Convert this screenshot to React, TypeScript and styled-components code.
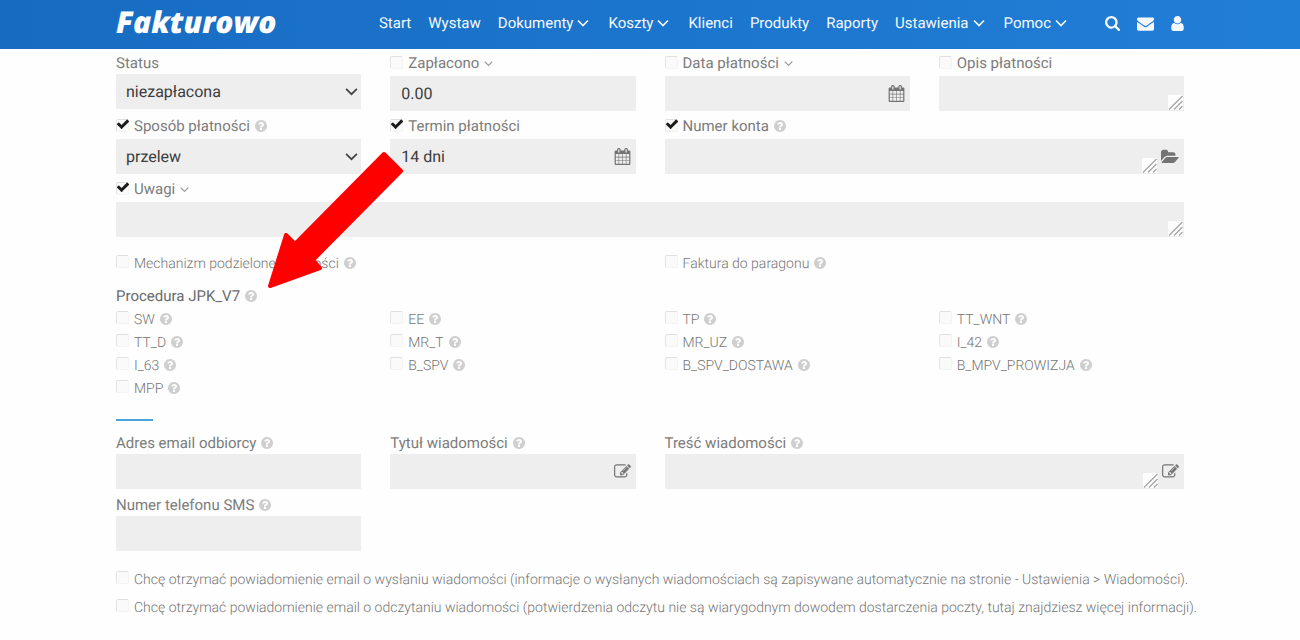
import React from "react";
import styled, { createGlobalStyle } from "styled-components";

const GlobalStyle = createGlobalStyle`
  *, *::before, *::after { box-sizing: border-box; }
  html, body { margin: 0; padding: 0; background: #fefefe; }
  body { font-family: Roboto, "Noto Sans", sans-serif; font-size: 15px; color: #777; text-rendering: geometricPrecision; }
  button, input, select, textarea { font: inherit; color: inherit; text-rendering: inherit; }
`;

const paths = {
  calendar:
    "M192 1664h288v-288h-288v288zm352 0h320v-288h-320v288zm-352-352h288v-320h-288v320zm352 0h320v-320h-320v320zm-352-384h288v-288h-288v288zm736 736h320v-288h-320v288zm-384-736h320v-288h-320v288zm768 736h288v-288h-288v288zm-384-352h320v-320h-320v320zm-352-864v-288q0-13-9.5-22.5t-22.5-9.5h-64q-13 0-22.5 9.5t-9.5 22.5v288q0 13 9.5 22.5t22.5 9.5h64q13 0 22.5-9.5t9.5-22.5zm736 864h288v-320h-288v320zm-384-384h320v-288h-320v288zm384 0h288v-288h-288v288zm32-480v-288q0-13-9.5-22.5t-22.5-9.5h-64q-13 0-22.5 9.5t-9.5 22.5v288q0 13 9.5 22.5t22.5 9.5h64q13 0 22.5-9.5t9.5-22.5zm384-64v1280q0 52-38 90t-90 38h-1408q-52 0-90-38t-38-90v-1280q0-52 38-90t90-38h128v-96q0-66 47-113t113-47h64q66 0 113 47t47 113v96h384v-96q0-66 47-113t113-47h64q66 0 113 47t47 113v96h128q52 0 90 38t38 90z",
  edit:
    "M888 1184l116-116-152-152-116 116v56h96v96h56zm440-720q-16-16-33 1l-350 350q-17 17-1 33t33-1l350-350q17-17 1-33zm80 594v190q0 119-84.5 203.5t-203.5 84.5h-832q-119 0-203.5-84.5t-84.5-203.5v-832q0-119 84.5-203.5t203.5-84.5h832q63 0 117 25 15 7 18 23 3 17-9 29l-49 49q-14 14-32 8-23-6-45-6h-832q-66 0-113 47t-47 113v832q0 66 47 113t113 47h832q66 0 113-47t47-113v-126q0-13 9-22l64-64q15-15 35-7t20 29zm-96-738l288 288-672 672h-288v-288zm444 132l-92 92-288-288 92-92q28-28 68-28t68 28l152 152q28 28 28 68t-28 68z",
  search:
    "M1216 832q0-185-131.5-316.5t-316.5-131.5-316.5 131.5-131.5 316.5 131.5 316.5 316.5 131.5 316.5-131.5 131.5-316.5zm512 832q0 52-38 90t-90 38q-54 0-90-38l-343-342q-179 124-399 124-143 0-273.5-55.5t-225-150-150-225-55.5-273.5 55.5-273.5 150-225 225-150 273.5-55.5 273.5 55.5 225 150 150 225 55.5 273.5q0 220-124 399l343 343q37 37 37 90z",
  user:
    "M1536 1399q0 109-62.5 187t-150.5 78h-854q-88 0-150.5-78t-62.5-187q0-85 8.5-160.5t31.5-152 58.5-131 94-89 134.5-34.5q131 128 313 128t313-128q76 0 134.5 34.5t94 89 58.5 131 31.5 152 8.5 160.5zm-256-887q0 159-112.5 271.5t-271.5 112.5-271.5-112.5-112.5-271.5 112.5-271.5 271.5-112.5 271.5 112.5 112.5 271.5z",
  mail:
    "M1792 710v794q0 66-47 113t-113 47h-1472q-66 0-113-47t-47-113v-794q44 49 101 87 362 246 497 345 57 42 92.5 65.5t94.5 48 110 24.5h2q51 0 110-24.5t94.5-48 92.5-65.5q170-123 498-345 57-39 100-87zm0-294q0 79-49 151t-122 123q-376 261-468 325-10 7-42.5 31t-54 38.5-52 32.5-57.5 27-50 9h-2q-23 0-50-9t-57.5-27-52-32.5-54-38.5-42.5-31q-91-64-262-182.5t-205-142.5q-62-42-117-115.5t-55-136.5q0-78 41.5-130t118.5-52h1472q65 0 112.5 47t47.5 113z",
  help:
    "M1024 1376v-192q0-14-9-23t-23-9h-192q-14 0-23 9t-9 23v192q0 14 9 23t23 9h192q14 0 23-9t9-23zm256-672q0-88-55.5-163t-138.5-116-170-41q-243 0-371 213-15 24 8 42l132 100q7 6 19 6 16 0 25-12 53-68 86-92 34-24 86-24 48 0 85.5 26t37.5 59q0 38-20 61t-68 45q-63 28-115.5 86.5t-52.5 125.5v36q0 14 9 23t23 9h192q14 0 23-9t9-23q0-19 21.5-49.5t54.5-49.5q32-18 49-28.5t46-35 44.5-48 28-60.5 12.5-81zm384 192q0 209-103 385.5t-279.5 279.5-385.5 103-385.5-103-279.5-279.5-103-385.5 103-385.5 279.5-279.5 385.5-103 385.5 103 279.5 279.5 103 385.5z",
  folder:
    "M1879 952q0 31-31 66l-336 396q-43 51-120.5 86.5t-143.5 35.5h-1088q-34 0-60.5-13t-26.5-43q0-31 31-66l336-396q43-51 120.5-86.5t143.5-35.5h1088q34 0 60.5 13t26.5 43zm-343-344v160h-832q-94 0-197 47.5t-164 119.5l-337 396-5 6q0-4-.5-12.5t-.5-12.5v-960q0-92 66-158t158-66h320q92 0 158 66t66 158v32h544q92 0 158 66t66 158z",
  check:
    "M1671 566q0 40-28 68l-724 724-136 136q-28 28-68 28t-68-28l-136-136-362-362q-28-28-28-68t28-68l136-136q28-28 68-28t68 28l294 295 656-657q28-28 68-28t68 28l136 136q28 28 28 68z",
};

type GlyphName = keyof typeof paths;

const boxes: Partial<Record<GlyphName, string>> = {
  folder: "0 0 1920 1792",
  help: "128 128 1536 1536",
  search: "64 128 1664 1664",
  user: "256 128 1280 1536",
};

const Svg = styled.svg`
  display: block;
  flex: none;
  fill: currentColor;
`;

function Glyph({ name, size, height }: { name: GlyphName; size: number; height?: number }) {
  return (
    <Svg viewBox={boxes[name] ?? "0 0 1792 1792"} width={size} height={height ?? size} aria-hidden="true">
      <path d={paths[name]} />
    </Svg>
  );
}

const ChevronSvg = styled.svg`
  display: block;
  flex: none;
  fill: none;
  stroke: currentColor;
`;

function Chevron({ size }: { size: number }) {
  return (
    <ChevronSvg viewBox="0 0 12 12" width={size} height={size} strokeWidth={1.6} aria-hidden="true">
      <path d="M1 3.5 6 8.5 11 3.5" />
    </ChevronSvg>
  );
}

const Header = styled.header`
  background: linear-gradient(90deg, #176cc1, #217ed7);
  color: #f4f9ff;
`;

const HeaderInner = styled.div`
  max-width: 1068px;
  height: 49px;
  margin: 0 auto;
  display: flex;
  align-items: center;
  justify-content: space-between;
`;

const Logo = styled.a`
  color: #fff;
  font-family: "Open Sans", sans-serif;
  font-weight: 800;
  font-style: italic;
  font-size: 30px;
  line-height: 40px;
  padding-bottom: 5px;
  text-decoration: none;
`;

const Nav = styled.nav`
  display: flex;
  align-items: center;
  gap: 17px;
  padding-bottom: 3px;
`;

const NavLink = styled.a<{ $menu?: boolean }>`
  display: flex;
  align-items: center;
  gap: 4px;
  margin-right: ${(p) => (p.$menu ? 2 : 0)}px;
  color: inherit;
  line-height: 20px;
  text-decoration: none;
`;

const NavTools = styled.div`
  display: flex;
  align-items: center;
  gap: 17px;
  padding-left: 19px;
`;

const IconButton = styled.button`
  display: flex;
  padding: 0;
  border: 0;
  background: none;
  cursor: pointer;
`;

const Main = styled.main`
  position: relative;
  max-width: 1068px;
  margin: 0 auto;
  padding-top: 1px;
`;

const Grid = styled.div<{ $rowGap?: number }>`
  display: grid;
  grid-template-columns: repeat(4, minmax(0, 1fr));
  column-gap: 29px;
  row-gap: ${(p) => p.$rowGap ?? 0}px;
`;

const Cell = styled.div<{ $span?: number }>`
  grid-column: span ${(p) => p.$span ?? 1};
  min-width: 0;
`;

const LabelRow = styled.div<{ $tall?: boolean }>`
  display: flex;
  align-items: center;
  height: ${(p) => (p.$tall ? 26 : 24)}px;
  padding-top: ${(p) => (p.$tall ? 0 : 2)}px;
  gap: 5px;
  line-height: 20px;
  color: #7c7c7c;
`;

const LightRow = styled.div`
  display: flex;
  align-items: center;
  gap: 5px;
  min-height: 23px;
  font-size: 14px;
  font-weight: 300;
  line-height: 20px;
  color: #757575;
  label { padding-top: 2px; }
  @media (min-width: 1200px) { white-space: nowrap; }
`;

const Help = styled(IconButton)`
  color: #cfcfcf;
`;

const Toggle = styled(IconButton)`
  color: #999;
`;

const Tick = styled.span`
  position: relative;
  flex: none;
  display: block;
  width: 13px;
  height: 15px;
  color: #1c1c1c;
  svg { position: absolute; top: -2px; left: 0; pointer-events: none; }
`;

const TickInput = styled.input`
  appearance: none;
  display: block;
  width: 13px;
  height: 13px;
  margin: 0;
  border: 1px solid #f4f4f4;
  border-top-color: #e0e0e0;
  border-left-color: #e4e4e4;
  border-radius: 2px;
  background: #fafafa;
`;

function CheckBox({ id, checked, label }: { id: string; checked?: boolean; label?: string }) {
  return (
    <Tick>
      <TickInput type="checkbox" id={id} defaultChecked={checked} aria-label={label} />
      {checked && <Glyph name="check" size={14} />}
    </Tick>
  );
}

const FieldBox = styled.div`
  position: relative;
  display: flex;
  align-items: center;
  height: 35px;
  background: #eee;
  color: #777;
`;

const TextInput = styled.input`
  flex: 1;
  min-width: 0;
  height: 35px;
  padding: 0 11px;
  border: 0;
  background: transparent;
  font-size: 16px;
  color: #3c3c3c;
`;

const Select = styled.select`
  appearance: none;
  flex: 1;
  height: 35px;
  padding: 0 10px;
  border: 0;
  border-radius: 0;
  background: transparent;
  font-size: 16px;
  color: #3c3c3c;
`;

const SelectMark = styled.span`
  position: absolute;
  right: 3px;
  top: 11px;
  color: #444;
  pointer-events: none;
`;

const AreaWrap = styled.div`
  position: relative;
  flex: 1;
  height: 35px;
`;

const TextArea = styled.textarea`
  display: block;
  width: 100%;
  height: 35px;
  padding: 8px 11px;
  border: 0;
  background: transparent;
  resize: none;
`;

const Grip = styled.svg`
  position: absolute;
  right: 1px;
  bottom: 1px;
  background: #fdfdfd;
  stroke: #a5a5a5;
  fill: none;
  pointer-events: none;
`;

const FieldIcon = styled(IconButton)`
  color: #747474;
  padding: 0 5px 0 3px;
`;

function Area({ id }: { id: string }) {
  return (
    <AreaWrap>
      <TextArea id={id} />
      <Grip width="15" height="15" viewBox="0 0 15 15" aria-hidden="true">
        <path d="M1 14.5 14.5 1M6 14.5 14.5 6M11 14.5 14.5 11" strokeWidth="1.3" />
      </Grip>
    </AreaWrap>
  );
}

type LabelProps = {
  id: string;
  text: string;
  tick?: boolean;
  checked?: boolean;
  help?: boolean;
  menu?: boolean;
};

function FieldLabel({ id, text, tick, checked, help, menu }: LabelProps) {
  return (
    <LabelRow $tall={tick}>
      {tick && <CheckBox id={`${id}-on`} checked={checked} label={text} />}
      <label htmlFor={id}>{text}</label>
      {help && <HelpMark />}
      {menu && (
        <Toggle type="button" aria-label="Rozwiń">
          <Chevron size={9} />
        </Toggle>
      )}
    </LabelRow>
  );
}

function HelpMark() {
  return (
    <Help type="button" aria-label="Pomoc">
      <Glyph name="help" size={12} />
    </Help>
  );
}

function Option({ id, text, help }: { id: string; text: string; help?: boolean }) {
  return (
    <LightRow>
      <CheckBox id={id} />
      <label htmlFor={id}>{text}</label>
      {help && <HelpMark />}
    </LightRow>
  );
}

const Options = styled(Grid)`
  padding-top: 14px;
`;

const Heading = styled(LabelRow)`
  margin-top: 9px;
  color: #6a6a6a;
`;

const Divider = styled.hr`
  width: 37px;
  height: 2px;
  margin: 20px 0 9px;
  border: 0;
  background: #4ba3dc;
`;

const Notices = styled.div`
  display: flex;
  flex-direction: column;
  gap: 5px;
  padding: 16px 0 10px;
`;

const Arrow = styled.svg`
  position: absolute;
  left: 150px;
  top: 101px;
  fill: #fe0000;
  stroke: #fe0000;
  pointer-events: none;
`;

const menu = [
  { text: "Start" },
  { text: "Wystaw" },
  { text: "Dokumenty", sub: true },
  { text: "Koszty", sub: true },
  { text: "Klienci" },
  { text: "Produkty" },
  { text: "Raporty" },
  { text: "Ustawienia", sub: true },
  { text: "Pomoc", sub: true },
];

const procedures = [
  "SW", "EE", "TP", "TT_WNT",
  "TT_D", "MR_T", "MR_UZ", "I_42",
  "I_63", "B_SPV", "B_SPV_DOSTAWA", "B_MPV_PROWIZJA",
  "MPP",
];

export default function App() {
  return (
    <>
      <GlobalStyle />
      <Header>
        <HeaderInner>
          <Logo href="#">Fakturowo</Logo>
          <Nav>
            {menu.map((m) => (
              <NavLink key={m.text} href="#" $menu={m.sub}>
                {m.text}
                {m.sub && <Chevron size={12} />}
              </NavLink>
            ))}
            <NavTools>
              <IconButton type="button" aria-label="Szukaj"><Glyph name="search" size={15} /></IconButton>
              <IconButton type="button" aria-label="Wiadomości"><Glyph name="mail" size={17} /></IconButton>
              <IconButton type="button" aria-label="Konto"><Glyph name="user" size={13} height={15} /></IconButton>
            </NavTools>
          </Nav>
        </HeaderInner>
      </Header>

      <Main>
        <Grid $rowGap={2}>
          <Cell>
            <FieldLabel id="status" text="Status" />
            <FieldBox>
              <Select id="status"><option>niezapłacona</option></Select>
              <SelectMark><Chevron size={13} /></SelectMark>
            </FieldBox>
          </Cell>
          <Cell>
            <FieldLabel id="paid" text="Zapłacono" tick menu />
            <FieldBox><TextInput id="paid" defaultValue="0.00" /></FieldBox>
          </Cell>
          <Cell>
            <FieldLabel id="paid-date" text="Data płatności" tick menu />
            <FieldBox>
              <TextInput id="paid-date" />
              <FieldIcon type="button" aria-label="Kalendarz"><Glyph name="calendar" size={17} /></FieldIcon>
            </FieldBox>
          </Cell>
          <Cell>
            <FieldLabel id="paid-note" text="Opis płatności" tick />
            <FieldBox><Area id="paid-note" /></FieldBox>
          </Cell>
          <Cell>
            <FieldLabel id="method" text="Sposób płatności" tick checked help />
            <FieldBox>
              <Select id="method"><option>przelew</option></Select>
              <SelectMark><Chevron size={13} /></SelectMark>
            </FieldBox>
          </Cell>
          <Cell>
            <FieldLabel id="due" text="Termin płatności" tick checked />
            <FieldBox>
              <TextInput id="due" defaultValue="14 dni" />
              <FieldIcon type="button" aria-label="Kalendarz"><Glyph name="calendar" size={17} /></FieldIcon>
            </FieldBox>
          </Cell>
          <Cell $span={2}>
            <FieldLabel id="account" text="Numer konta" tick checked help />
            <FieldBox>
              <Area id="account" />
              <FieldIcon type="button" aria-label="Wybierz konto"><Glyph name="folder" size={18} /></FieldIcon>
            </FieldBox>
          </Cell>
          <Cell $span={4}>
            <FieldLabel id="notes" text="Uwagi" tick checked menu />
            <FieldBox><Area id="notes" /></FieldBox>
          </Cell>
        </Grid>

        <Options>
          <Cell $span={2}><Option id="split" text="Mechanizm podzielonej płatności" help /></Cell>
          <Cell $span={2}><Option id="receipt" text="Faktura do paragonu" help /></Cell>
        </Options>

        <Heading>
          <span>Procedura JPK_V7</span>
          <HelpMark />
        </Heading>
        <Grid>
          {procedures.map((p) => (
            <Cell key={p}><Option id={`proc-${p}`} text={p} help /></Cell>
          ))}
        </Grid>

        <Divider />

        <Grid $rowGap={3}>
          <Cell>
            <FieldLabel id="email" text="Adres email odbiorcy" help />
            <FieldBox><TextInput id="email" /></FieldBox>
          </Cell>
          <Cell>
            <FieldLabel id="subject" text="Tytuł wiadomości" help />
            <FieldBox>
              <TextInput id="subject" />
              <FieldIcon type="button" aria-label="Edytuj"><Glyph name="edit" size={17} /></FieldIcon>
            </FieldBox>
          </Cell>
          <Cell $span={2}>
            <FieldLabel id="body" text="Treść wiadomości" help />
            <FieldBox>
              <Area id="body" />
              <FieldIcon type="button" aria-label="Edytuj"><Glyph name="edit" size={17} /></FieldIcon>
            </FieldBox>
          </Cell>
          <Cell>
            <FieldLabel id="sms" text="Numer telefonu SMS" help />
            <FieldBox><TextInput id="sms" /></FieldBox>
          </Cell>
        </Grid>

        <Notices>
          <Option
            id="notify-sent"
            text="Chcę otrzymać powiadomienie email o wysłaniu wiadomości (informacje o wysłanych wiadomościach są zapisywane automatycznie na stronie - Ustawienia > Wiadomości)."
          />
          <Option
            id="notify-read"
            text="Chcę otrzymać powiadomienie email o odczytaniu wiadomości (potwierdzenia odczytu nie są wiarygodnym dowodem dostarczenia poczty, tutaj znajdziesz więcej informacji)."
          />
        </Notices>

        <Arrow width="140" height="140" viewBox="0 0 140 140" strokeWidth="4" strokeLinejoin="round" aria-hidden="true">
          <path d="M118 4 135 21 47 110 54 118 4 136 20 85 29 94Z" />
        </Arrow>
      </Main>
    </>
  );
}
